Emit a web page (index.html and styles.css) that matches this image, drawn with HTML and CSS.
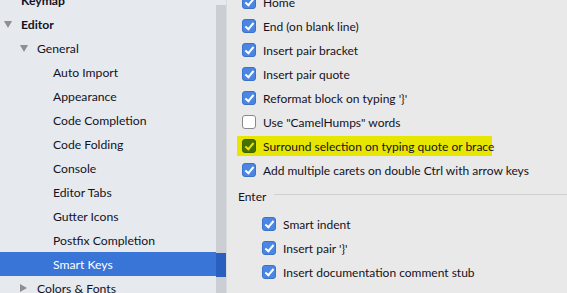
FILE: index.html
```html
<html lang="en">

<head>
  <meta charset="UTF-8">
  <title>Settings - Smart Keys</title>
  <link rel="stylesheet" href="styles.css">
</head>

<body>
  <div class="window">
    <div class="tree">
      <div class="tree-list">
        <div class="node lvl0 bold">Keymap</div>
        <div class="node lvl0 bold"><span class="arrow down"></span>Editor</div>
        <div class="node lvl1"><span class="arrow down"></span>General</div>
        <div class="node lvl2">Auto Import</div>
        <div class="node lvl2">Appearance</div>
        <div class="node lvl2">Code Completion</div>
        <div class="node lvl2">Code Folding</div>
        <div class="node lvl2">Console</div>
        <div class="node lvl2">Editor Tabs</div>
        <div class="node lvl2">Gutter Icons</div>
        <div class="node lvl2">Postfix Completion</div>
        <div class="node lvl2 selected">Smart Keys</div>
        <div class="node lvl1"><span class="arrow right"></span>Colors &amp; Fonts</div>
      </div>
      <div class="scrollbar">
        <div class="thumb-sel"></div>
      </div>
    </div>
    <div class="options">
      <div class="opts">
        <label class="opt"><span class="box on"></span>Home</label>
        <label class="opt"><span class="box on"></span>End (on blank line)</label>
        <label class="opt"><span class="box on"></span>Insert pair bracket</label>
        <label class="opt"><span class="box on"></span>Insert pair quote</label>
        <label class="opt"><span class="box on"></span>Reformat block on typing '}'</label>
        <label class="opt"><span class="box"></span>Use "CamelHumps" words</label>
        <label class="opt hl"><span class="box on"></span>Surround selection on typing quote or brace</label>
        <label class="opt"><span class="box on"></span>Add multiple carets on double Ctrl with arrow keys</label>
      </div>
      <div class="group">
        <span class="group-title">Enter</span>
        <span class="group-line"></span>
      </div>
      <div class="opts sub">
        <label class="opt"><span class="box on"></span>Smart indent</label>
        <label class="opt"><span class="box on"></span>Insert pair '}'</label>
        <label class="opt"><span class="box on"></span>Insert documentation comment stub</label>
      </div>
    </div>
  </div>
</body>

</html>
```

FILE: styles.css
```css
html,
body {
  margin: 0;
  height: 100%;
  overflow: hidden;
}

body {
  font-family: "Segoe UI", Lato, "Noto Sans", sans-serif;
  font-size: 12px;
  color: #14121e;
}

.window {
  display: flex;
  height: 293px;
}

.tree {
  display: flex;
  width: 226px;
  background: #e6eaee;
  border-right: 1px solid #d8dadc;
  font-size: 12.2px;
}

.tree-list {
  width: 216px;
  margin-top: -12px;
}

.node {
  height: 24px;
  display: flex;
  align-items: center;
  position: relative;
  white-space: nowrap;
}

.node.bold {
  font-weight: bold;
}

.lvl0 {
  padding-left: 21px;
}

.lvl1 {
  padding-left: 37px;
}

.lvl2 {
  padding-left: 53px;
}

.node.selected {
  background: #3875d7;
  color: #fff;
}

.arrow {
  position: absolute;
  width: 0;
  height: 0;
}

.lvl0 .arrow {
  left: 4px;
}

.lvl1 .arrow {
  left: 20px;
}

.arrow.down {
  top: 9px;
  border-left: 4px solid transparent;
  border-right: 4px solid transparent;
  border-top: 7px solid #8e8e8e;
}

.arrow.right {
  top: 8px;
  border-top: 4px solid transparent;
  border-bottom: 4px solid transparent;
  border-left: 7px solid #8e8e8e;
}

.scrollbar {
  width: 10px;
  margin-top: 5px;
  background: #cbcfd3;
  position: relative;
}

.thumb-sel {
  position: absolute;
  left: 0;
  right: 0;
  top: 248px;
  height: 24px;
  background: #2a5fbf;
}

.options {
  flex: 1;
  background: #e9e9e9;
  padding-left: 15px;
}

.opts {
  display: flex;
  flex-direction: column;
}

.opts:first-child {
  margin-top: -10px;
}

.opt {
  height: 24px;
  display: flex;
  align-items: center;
  white-space: nowrap;
}

.box {
  width: 14px;
  height: 14px;
  box-sizing: border-box;
  border-radius: 3px;
  margin-right: 7px;
  flex: none;
  background: #fff;
  border: 1px solid #8a8a8a;
  position: relative;
}

.box.on {
  background: #4a86e2;
  border-color: #3b73cc;
}

.box.on::after {
  content: "";
  position: absolute;
  left: 4px;
  top: 1px;
  width: 3px;
  height: 7px;
  border-right: 2px solid #fff;
  border-bottom: 2px solid #fff;
  transform: rotate(40deg);
}

.opt.hl {
  background: #e6e600;
  margin-left: -5px;
  padding-left: 5px;
  width: 250px;
  height: 20px;
  margin-top: 2px;
  margin-bottom: 2px;
}

.opt.hl .box.on {
  background: #487000;
  border-color: #3d6000;
}

.opt.hl .box.on::after {
  border-color: #e6e600;
}

.group {
  display: flex;
  align-items: center;
  height: 24px;
  margin-left: -4px;
  margin-top: 2px;
}

.group-title {
  margin-right: 8px;
}

.group-line {
  flex: 1;
  height: 1px;
  background: #cfcfcf;
  margin-top: -3px;
}

.opts.sub {
  margin-top: 4px;
  padding-left: 20px;
}
```
